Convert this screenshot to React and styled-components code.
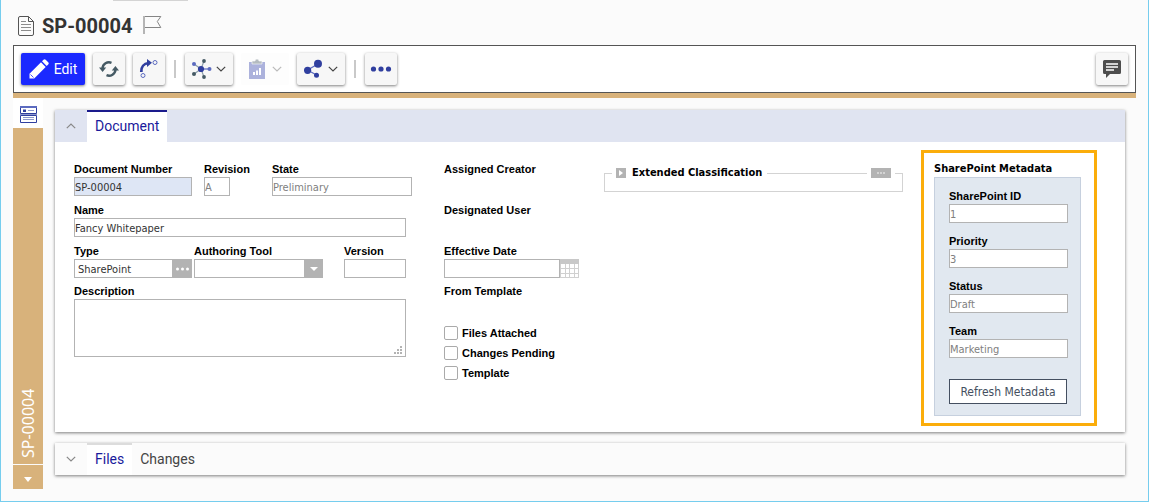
import React from "react";
import styled, { createGlobalStyle, css } from "styled-components";

const navy = "#303f9f";
const slate = "#455a64";
const tan = "#d8b27b";

const GlobalStyle = createGlobalStyle`
  *, *::before, *::after { box-sizing: border-box; }
  body { margin: 0; background: #fbfbfb; font-family: Roboto, "Liberation Sans", sans-serif; }
  button, input, select, textarea { margin: 0; border-radius: 0; }
  button { cursor: pointer; }
`;

const Page = styled.div`
  display: flex;
  flex-direction: column;
  min-height: 100vh;
  padding: 0 12px 12px;
  border: 1px solid #76cdee;
  border-top: 0;
  background: #fbfbfb;
`;

const DragHandle = styled.div`
  width: 75px;
  height: 1px;
  margin-left: 100px;
  background: #d4d4d4;
`;

const TitleBar = styled.header`
  display: flex;
  align-items: center;
  gap: 8px;
  height: 44px;
  padding: 6px 5px 0;
`;

const Title = styled.h1`
  margin: 0 3px 0 0;
  font-size: 20px;
  line-height: 24px;
  font-weight: 700;
  color: #333;
`;

const Toolbar = styled.div`
  display: flex;
  align-items: center;
  gap: 8px;
  height: 48px;
  padding: 0 7px;
  border: 1px solid #555;
  background: #fff;
`;

const Accent = styled.div`
  height: 5px;
  background: ${tan};
`;

const ToolButton = styled.button`
  display: flex;
  align-items: center;
  justify-content: center;
  gap: 4px;
  width: ${(p) => (p.$wide ? 48 : 32)}px;
  height: 32px;
  padding: 0;
  border: 0;
  border-radius: 2px;
  background: #f7f7f7;
  box-shadow: 0 1px 3px rgba(0, 0, 0, 0.5);
  color: #444;
  &:disabled { background: #fdfdfd; box-shadow: none; color: #bbb; }
`;

const EditButton = styled(ToolButton)`
  width: 64px;
  gap: 5px;
  background: #1b29ff;
  color: #fff;
  font: 400 14px/20px Roboto, sans-serif;
`;

const Divider = styled.span`
  width: 2px;
  height: 18px;
  margin: 0 1px;
  background: #c9c9c9;
`;

const Spacer = styled.span`
  flex: 1;
`;

const Workspace = styled.div`
  display: flex;
  flex: 1;
  gap: 12px;
`;

const Sidebar = styled.aside`
  display: flex;
  flex-direction: column;
  width: 30px;
`;

const SideTop = styled.button`
  display: flex;
  align-items: center;
  justify-content: center;
  height: 30px;
  padding: 3px 0 0;
  border: 0;
  background: #fff;
`;

const SideLabel = styled.div`
  display: flex;
  flex: 1;
  align-items: center;
  padding-top: 6px;
  writing-mode: vertical-rl;
  transform: rotate(180deg);
  background: ${tan};
  color: #fff;
  font: 400 16px/20px "Noto Sans", sans-serif;
`;

const SideMenu = styled.button`
  display: flex;
  align-items: center;
  justify-content: center;
  height: 24px;
  margin-top: 1px;
  padding: 4px 0 0;
  border: 0;
  background: ${tan};
`;

const Content = styled.main`
  display: flex;
  flex: 1;
  flex-direction: column;
  gap: 11px;
  min-width: 0;
  padding: 12px 11px 0 0;
`;

const Panel = styled.section`
  background: ${(p) => (p.$flat ? "#fbfbfb" : "#fff")};
  box-shadow: 0 1px 3px rgba(0, 0, 0, 0.5);
`;

const TabStrip = styled.div`
  display: flex;
  height: 32px;
  background: ${(p) => (p.$tinted ? "#e0e4f1" : "transparent")};
`;

const Toggle = styled.button`
  display: flex;
  align-items: center;
  justify-content: center;
  width: 32px;
  padding: 0;
  border: 0;
  background: none;
  color: #888;
`;

const Tab = styled.button`
  padding: 0 8px 2px;
  border: 0;
  border-top: 2px solid transparent;
  background: none;
  color: #444;
  font: 400 14px/28px Roboto, sans-serif;
  ${(p) =>
    p.$active &&
    css`
      border-top-color: ${p.$active};
      background: #fff;
      color: #1a1a9c;
    `}
`;

const PanelBody = styled.div`
  display: flex;
  align-items: flex-start;
  padding: 8px 28px 6px 19px;
`;

const Column = styled.div`
  display: flex;
  flex-direction: column;
  gap: 5px;
  flex: none;
  width: ${(p) => p.$width}px;
  margin-right: ${(p) => p.$after}px;
  padding-top: 11px;
`;

const FieldStack = styled.div`
  display: flex;
  flex-direction: column;
  gap: 6px;
`;

const Row = styled.div`
  display: flex;
`;

const FieldBox = styled.div`
  display: flex;
  flex-direction: column;
  flex: ${(p) => (p.$width ? "none" : "1")};
  width: ${(p) => (p.$width ? `${p.$width}px` : "auto")};
  min-width: 0;
  min-height: 35px;
  margin-right: ${(p) => p.$after || 0}px;
`;

const labelText = css`
  color: #000;
  font: 700 11px/16px "Liberation Sans", Arial, sans-serif;
  white-space: nowrap;
`;

const Label = styled.label`
  ${labelText}
`;

const Caption = styled.span`
  ${labelText}
`;

const control = css`
  width: 100%;
  border: 1px solid #b3b3b3;
  background: #fff;
  color: #333;
  font: 400 11px/17px "DejaVu Sans Condensed", "DejaVu Sans", sans-serif;
  outline: 0;
`;

const TextInput = styled.input`
  ${control}
  height: 19px;
  padding: 1px ${(p) => (p.$inset ? 3 : 0)}px 0;
  background: ${(p) => (p.$key ? "#dee6f5" : "#fff")};
  &:disabled { color: #808080; }
`;

const TextArea = styled.textarea`
  ${control}
  display: block;
  height: 58px;
  padding: 1px;
  resize: none;
`;

const Overlaid = styled.div`
  position: relative;
`;

const Grip = styled.svg`
  position: absolute;
  right: 3px;
  bottom: 2px;
  pointer-events: none;
`;

const SelectBox = styled.select`
  ${control}
  display: block;
  height: 19px;
  padding: 0 20px 0 2px;
  appearance: none;
`;

const SelectArrow = styled.span`
  position: absolute;
  top: 0;
  right: 0;
  display: flex;
  align-items: center;
  justify-content: center;
  width: 19px;
  height: 19px;
  background: #b3b3b3;
  pointer-events: none;
`;

const Addon = styled.button`
  display: flex;
  align-items: center;
  justify-content: center;
  flex: none;
  width: 19px;
  height: 19px;
  padding: 0;
  border: 0;
  background: ${(p) => (p.$plain ? "none" : "#b3b3b3")};
`;

const CheckRow = styled.label`
  ${labelText}
  display: flex;
  align-items: center;
  gap: 4px;
  height: 20px;
`;

const Check = styled.input`
  width: 14px;
  height: 14px;
  appearance: none;
  border: 1px solid #aaa;
  background: #fff;
  && { border-radius: 2px; }
`;

const Checks = styled.div`
  display: flex;
  flex-direction: column;
`;

const Group = styled.section`
  flex: 1;
  min-width: 0;
  height: 19px;
  margin: 23px 18px 0 0;
  border: 1px solid #d3d3d3;
  border-top: 0;
`;

const GroupHead = styled.div`
  display: flex;
  align-items: center;
  gap: 4px;
  height: 16px;
  margin: -8px -1px 0;
`;

const Rule = styled.span`
  flex: ${(p) => (p.$fill ? 1 : "none")};
  width: 8px;
  height: 1px;
  background: #d3d3d3;
`;

const GroupTitle = styled.h2`
  margin: 0 1px 0 2px;
  color: #000;
  font: 700 11px/16px "DejaVu Sans Condensed", "DejaVu Sans", sans-serif;
  white-space: nowrap;
`;

const MiniButton = styled.button`
  display: flex;
  align-items: center;
  justify-content: center;
  width: ${(p) => p.$width}px;
  height: 10px;
  padding: 0;
  border: 0;
  background: #b3b3b3;
`;

const Highlight = styled.section`
  flex: none;
  width: 176px;
  padding: 8px 13px 7px 10px;
  border: 3px solid #fbad0a;
`;

const MetaTitle = styled(GroupTitle)`
  margin: 0;
`;

const MetaBox = styled.div`
  display: flex;
  flex-direction: column;
  gap: 10px;
  padding: 10px 12px 11px 14px;
  border: 1px solid #c6d0de;
  background: #e1e8f0;
`;

const RefreshButton = styled.button`
  height: 25px;
  margin: 11px 1px 0 0;
  padding: 2px 0 0;
  border: 1px solid #444f60;
  background: #fff;
  color: #444f60;
  font: 400 12px/21px "DejaVu Sans Condensed", "DejaVu Sans", sans-serif;
  white-space: nowrap;
`;

const Chevron = ({ up }) => (
  <svg width="10" height="6" viewBox="0 0 10 6" fill="none" stroke="currentColor" strokeWidth="1.2" aria-hidden="true">
    <path d={up ? "M.8 5.200 5 1l4.200 4.200" : "M.8 .8 5 5 9.200 .8"} />
  </svg>
);

const Dots = ({ width, gap, r, color }) => (
  <svg width={width} height="6" viewBox={`${-width / 2} -3 ${width} 6`} fill={color} aria-hidden="true">
    {[-gap, 0, gap].map((x) => (
      <circle key={x} cx={x} r={r} />
    ))}
  </svg>
);

const DocIcon = () => (
  <svg width="16" height="21" viewBox="0 0 16 21" fill="none" stroke="#555" aria-hidden="true">
    <path d="M2 .5h8.500l5 5V18a1.500 1.500 0 0 1-1.500 1.500H2A1.500 1.500 0 0 1 .5 18V2A1.500 1.500 0 0 1 2 .5z" />
    <path d="M10.500.5v5h5" />
    <path d="M3 5.500h5M3 8.500h10M3 11.500h10M3 14.500h10" stroke="#8c8c8c" />
  </svg>
);

const FlagIcon = () => (
  <svg width="19" height="20" viewBox="0 0 19 20" fill="none" aria-hidden="true">
    <path d="M1 0v18" stroke="#b5b5b5" strokeWidth="2" />
    <path d="M2 .5h15.800l-3.500 5 3.500 6H2" stroke="#858585" />
  </svg>
);

const PencilIcon = () => (
  <svg width="20" height="20" viewBox="0 0 20 20" fill="#fff" aria-hidden="true">
    <path d="M.5 14.800 12 3.300l4.700 4.700L5.200 19.500H.5z" />
    <path d="m13 2.300 1.500-1.500a1.600 1.600 0 0 1 2.200 0l2.500 2.500a1.600 1.600 0 0 1 0 2.200L17.700 7z" />
    <path d="m1.500 15.500 3 3" stroke="#1b29ff" strokeWidth=".8" />
  </svg>
);

const RefreshIcon = () => (
  <svg width="20" height="18" viewBox="0 0 20 18" fill="none" stroke={slate} strokeWidth="2.400" aria-hidden="true">
    <path d="M3.500 8.500A6.500 6.500 0 0 1 12.500 2.800" />
    <path d="M16.500 9.500A6.500 6.500 0 0 1 7.500 15.200" />
    <path d="M0 10.500h7.200L3.600 6zM20 7.500h-7.200l3.600 4.500z" fill={slate} stroke="none" transform="matrix(1 0 0 -1 0 18)" />
  </svg>
);

const RouteIcon = () => (
  <svg width="20" height="20" viewBox="0 0 20 20" fill="none" aria-hidden="true">
    <path d="M2.300 13C2 8 5 4.500 9.500 4.200" stroke={navy} strokeWidth="2.800" />
    <path d="M8 0v8l5-4.300z" fill={navy} />
    <circle cx="16" cy="3.500" r="2" stroke="#5c6bc0" />
    <circle cx="4" cy="16.500" r="2" stroke="#5c6bc0" />
  </svg>
);

const HubIcon = () => (
  <svg width="20" height="20" viewBox="0 0 20 20" aria-hidden="true">
    <g stroke="#8c9eaa" strokeWidth="1.200">
      <path d="M9 10 2 5M9 10l3-8M9 10l3 8M9 10l-7 5" />
    </g>
    <path d="M9 10h8" stroke="#8c96d4" strokeWidth="1.800" />
    <circle cx="9" cy="10" r="3.100" fill={navy} />
    <circle cx="2" cy="5" r="2" fill="#5c6bc0" />
    <circle cx="17.500" cy="10" r="2" fill="#5c6bc0" />
    <circle cx="12" cy="2" r="1.900" fill={slate} />
    <circle cx="12" cy="18" r="1.900" fill={slate} />
    <circle cx="2" cy="15" r="2" fill={slate} />
  </svg>
);

const ReportIcon = () => (
  <svg width="20" height="20" viewBox="0 0 20 20" aria-hidden="true">
    <path d="M1 3h16v17H1z" fill="#acb2dc" />
    <path d="M4 2h3a2 2 0 0 1 4 0h3v3H4z" fill="#b4bbc0" stroke="#fdfdfd" strokeWidth=".6" />
    <path d="M5 13h2v3H5zM8 11.500h2V16H8zM11 9h2v7h-2z" fill="#fff" />
  </svg>
);

const ShareIcon = () => (
  <svg width="20" height="20" viewBox="0 0 20 20" fill={navy} aria-hidden="true">
    <path d="m14 5-10.500 6 9 5" fill="none" stroke="#5c6bc0" strokeWidth="1.300" />
    <circle cx="14" cy="4.800" r="4" />
    <circle cx="3.600" cy="11.300" r="3.600" />
    <circle cx="12.500" cy="16.300" r="2.500" />
  </svg>
);

const ChatIcon = () => (
  <svg width="18" height="18" viewBox="0 0 18 18" aria-hidden="true">
    <path d="M1.500 0h15A1.500 1.500 0 0 1 18 1.500v11a1.500 1.500 0 0 1-1.500 1.500H7l-4 4v-4H1.500A1.500 1.500 0 0 1 0 12.500v-11A1.500 1.500 0 0 1 1.500 0z" fill="#4d4d4d" />
    <path d="M3 4h12M3 7h12M3 10h8" stroke="#fff" strokeWidth="1.600" />
  </svg>
);

const FormIcon = () => (
  <svg width="17" height="17" viewBox="0 0 17 17" fill="none" stroke={navy} aria-hidden="true">
    <path d="M.5 1.500h16v6H.5zM.5 9.500h16v7H.5z" />
    <path d="M0 1h17" strokeWidth="2" stroke="#5c6bc0" />
    <path d="M0 8.500h17" stroke="#8c96cc" />
    <path d="M3 3.500h3v2.500H3z" fill={navy} stroke="none" />
    <path d="M8 4.500h6M3 11.500h11M3 13.500h11" stroke="#8c96cc" />
  </svg>
);

const CalendarIcon = () => (
  <svg width="19" height="19" viewBox="0 0 19 19" aria-hidden="true">
    <path d="M0 0h19v5H0z" fill="#c8c8c8" />
    <path d="M.5 5v14M5.500 5v14M9.500 5v14M14.500 5v14M18.500 5v14M0 9.500h19M0 14.500h19M0 18.500h19" stroke="#d0d0d0" />
  </svg>
);

const Triangle = ({ w = 10, h = 5 }) => (
  <svg width={w} height={h} viewBox="0 0 10 5" preserveAspectRatio="none" fill="#fff" aria-hidden="true">
    <path d="M0 0h10L5 5z" />
  </svg>
);

const Field = ({ id, label, width, after, children, ...rest }) => (
  <FieldBox $width={width} $after={after}>
    <Label htmlFor={id}>{label}</Label>
    {children || <TextInput id={id} {...rest} />}
  </FieldBox>
);

const metadata = [
  ["sp-id", "SharePoint ID", "1"],
  ["sp-priority", "Priority", "3"],
  ["sp-status", "Status", "Draft"],
  ["sp-team", "Team", "Marketing"],
];

export default function App() {
  return (
    <Page>
      <GlobalStyle />
      <DragHandle />
      <TitleBar>
        <DocIcon />
        <Title>SP-00004</Title>
        <FlagIcon />
      </TitleBar>
      <Toolbar role="toolbar">
        <EditButton><PencilIcon />Edit</EditButton>
        <ToolButton aria-label="Refresh"><RefreshIcon /></ToolButton>
        <ToolButton aria-label="Promote"><RouteIcon /></ToolButton>
        <Divider />
        <ToolButton $wide aria-label="Navigate"><HubIcon /><Chevron /></ToolButton>
        <ToolButton $wide disabled aria-label="Reports"><ReportIcon /><Chevron /></ToolButton>
        <ToolButton $wide aria-label="Share"><ShareIcon /><Chevron /></ToolButton>
        <Divider />
        <ToolButton aria-label="More"><Dots width={22} gap={7.5} r={2.6} color={navy} /></ToolButton>
        <Spacer />
        <ToolButton aria-label="Discussion"><ChatIcon /></ToolButton>
      </Toolbar>
      <Accent />
      <Workspace>
        <Sidebar>
          <SideTop aria-label="Form"><FormIcon /></SideTop>
          <SideLabel>SP-00004</SideLabel>
          <SideMenu aria-label="Open menu"><Triangle w={8} /></SideMenu>
        </Sidebar>
        <Content>
          <Panel>
            <TabStrip $tinted>
              <Toggle aria-label="Collapse"><Chevron up /></Toggle>
              <Tab $active="#1a1a8c">Document</Tab>
            </TabStrip>
            <PanelBody>
              <Column $width={332} $after={38}>
                <FieldStack>
                  <Row>
                    <Field id="number" label="Document Number" width={118} after={12} $key defaultValue="SP-00004" />
                    <Field id="revision" label="Revision" width={26} after={42} disabled defaultValue="A" />
                    <Field id="state" label="State" width={140} disabled defaultValue="Preliminary" />
                  </Row>
                  <Row>
                    <Field id="name" label="Name" defaultValue="Fancy Whitepaper" />
                  </Row>
                  <Row>
                    <Field id="type" label="Type" width={118} after={2}>
                      <Row>
                        <TextInput id="type" $inset defaultValue="SharePoint" />
                        <Addon aria-label="Choose type"><Dots width={15} gap={5} r={1.5} color="#fff" /></Addon>
                      </Row>
                    </Field>
                    <Field id="tool" label="Authoring Tool" width={129} after={21}>
                      <Overlaid>
                        <SelectBox id="tool"><option> </option></SelectBox>
                        <SelectArrow><Triangle w={8} h={4} /></SelectArrow>
                      </Overlaid>
                    </Field>
                    <Field id="version" label="Version" width={62} />
                  </Row>
                </FieldStack>
                <Field id="description" label="Description">
                  <Overlaid>
                    <TextArea id="description" />
                    <Grip width="9" height="9" viewBox="0 0 9 9" fill="#b3b3b3" aria-hidden="true">
                      <path d="M0 6h2v2H0zM3 6h2v2H3zM6 6h2v2H6zM3 3h2v2H3zM6 3h2v2H6zM6 0h2v2H6z" />
                    </Grip>
                  </Overlaid>
                </Field>
              </Column>
              <Column $width={135} $after={25}>
                <FieldStack>
                  <FieldBox $width={135}><Caption>Assigned Creator</Caption></FieldBox>
                  <FieldBox $width={135}><Caption>Designated User</Caption></FieldBox>
                  <Field id="effective" label="Effective Date" width={135}>
                    <Row>
                      <TextInput id="effective" />
                      <Addon $plain aria-label="Pick date"><CalendarIcon /></Addon>
                    </Row>
                  </Field>
                </FieldStack>
                <FieldBox $width={135}><Caption>From Template</Caption></FieldBox>
                <Checks>
                  {["Files Attached", "Changes Pending", "Template"].map((t) => (
                    <CheckRow key={t}><Check type="checkbox" />{t}</CheckRow>
                  ))}
                </Checks>
              </Column>
              <Group>
                <GroupHead>
                  <Rule />
                  <MiniButton $width={10} aria-label="Expand">
                    <svg width="4" height="6" viewBox="0 0 4 6" fill="#fff" aria-hidden="true"><path d="M0 0l4 3-4 3z" /></svg>
                  </MiniButton>
                  <GroupTitle>Extended Classification</GroupTitle>
                  <Rule $fill />
                  <MiniButton $width={20} aria-label="Choose classification"><Dots width={12} gap={3} r={0.8} color="#fff" /></MiniButton>
                  <Rule />
                </GroupHead>
              </Group>
              <Highlight>
                <MetaTitle>SharePoint Metadata</MetaTitle>
                <MetaBox>
                  {metadata.map(([id, label, value]) => (
                    <Field key={id} id={id} label={label} disabled defaultValue={value} />
                  ))}
                  <RefreshButton>Refresh Metadata</RefreshButton>
                </MetaBox>
              </Highlight>
            </PanelBody>
          </Panel>
          <Panel $flat>
            <TabStrip>
              <Toggle aria-label="Expand"><Chevron /></Toggle>
              <Tab $active="#dcdcdc">Files</Tab>
              <Tab>Changes</Tab>
            </TabStrip>
          </Panel>
        </Content>
      </Workspace>
    </Page>
  );
}
